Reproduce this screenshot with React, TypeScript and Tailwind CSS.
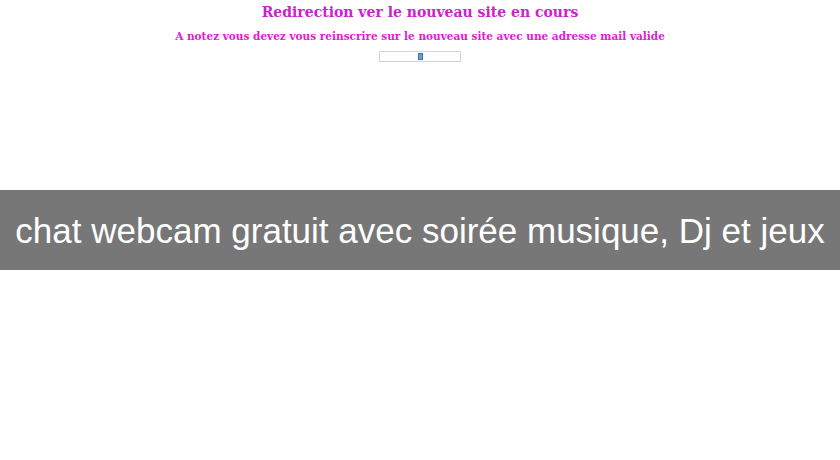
export default function App() {
  return (
    <div className="w-[840px] h-[460px] bg-white flex flex-col overflow-hidden">
      {/* avis de redirection */}
      <div className="h-[190px] flex flex-col items-center font-['DejaVu_Serif',serif] font-bold">
        <p className="mt-[3px] text-[14px] leading-[18px] text-[#cc22cc]">Redirection ver le nouveau site en cours</p>
        <p className="mt-[9px] text-[10.5px] leading-[12px] text-[#e020d0]">
          A notez vous devez vous reinscrire sur le nouveau site avec une adresse mail valide
        </p>
        <div className="mt-[9px] w-[82px] h-[11px] border border-[#d4d4d4] flex items-center justify-center">
          <span className="w-[5px] h-[7px] bg-[#6f9fd0] border border-[#3f6fa8]" />
        </div>
      </div>

      {/* bandeau titre */}
      <div className="h-[80px] bg-[#777777] flex items-center justify-center">
        <h1 className="text-white text-[35px] font-['Liberation_Sans',Arial,sans-serif] font-normal leading-none">
          chat webcam gratuit avec soirée musique, Dj et jeux
        </h1>
      </div>

      <div className="flex-1 bg-white" />
    </div>
  )
}
